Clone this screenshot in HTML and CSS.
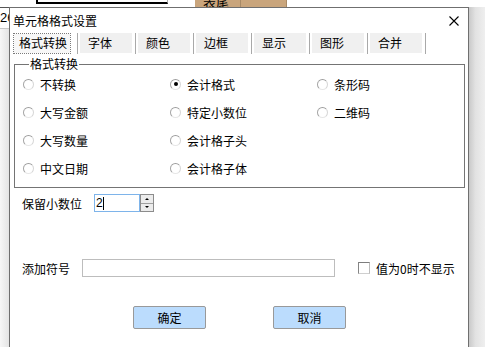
FILE: index.html
```html
<!DOCTYPE html>
<html lang="zh">
<head>
    <meta charset="UTF-8">
    <title>单元格格式设置</title>
    <link rel="stylesheet" href="styles.css">
</head>
<body>
<div class="screen">
    <div class="sheetTop">
        <div class="c blank"></div>
        <div class="c selected"></div>
        <div class="c gap"></div>
        <div class="c head">表尾</div>
        <div class="c head"></div>
    </div>
    <div class="rowHeads">
        <div class="rowNo">26</div>
    </div>

    <div class="dialog">
        <div class="titlebar">
            <span>单元格格式设置</span>
            <svg class="close" width="10" height="10" viewBox="0 0 10 10">
                <path d="M0.5 0.5 L9.5 9.5 M9.5 0.5 L0.5 9.5" stroke="#000" stroke-width="1.1"/>
            </svg>
        </div>

        <div class="tabs">
            <div class="tab active"><span>格式转换</span></div>
            <div class="tab"><span>字体</span></div>
            <div class="tab"><span>颜色</span></div>
            <div class="tab"><span>边框</span></div>
            <div class="tab"><span>显示</span></div>
            <div class="tab"><span>图形</span></div>
            <div class="tab"><span>合并</span></div>
            <div class="tabEnd"></div>
        </div>

        <fieldset class="group">
            <legend>格式转换</legend>
            <div class="radios">
                <label class="radio"><i></i>不转换</label>
                <label class="radio on"><i></i>会计格式</label>
                <label class="radio"><i></i>条形码</label>
                <label class="radio"><i></i>大写金额</label>
                <label class="radio"><i></i>特定小数位</label>
                <label class="radio"><i></i>二维码</label>
                <label class="radio"><i></i>大写数量</label>
                <label class="radio"><i></i>会计格子头</label>
                <div></div>
                <label class="radio"><i></i>中文日期</label>
                <label class="radio"><i></i>会计格子体</label>
            </div>
        </fieldset>

        <div class="row decimals">
            <span class="lbl">保留小数位</span>
            <div class="spin">
                <div class="spinText">2<b class="caret"></b></div>
                <div class="spinBtns">
                    <div class="up"></div>
                    <div class="down"></div>
                </div>
            </div>
        </div>

        <div class="row symbol">
            <span class="lbl">添加符号</span>
            <div class="textBox"></div>
            <label class="check"><i></i>值为0时不显示</label>
        </div>

        <div class="buttons">
            <button>确定</button>
            <button>取消</button>
        </div>
    </div>

    <div class="shadow"></div>
</div>
</body>
</html>
```

FILE: styles.css
```css
body {
    margin: 0;
    background-color: white;
    font-family: "Noto Sans CJK SC", "Noto Sans", sans-serif;
    font-size: 12px;
    color: #000;
    white-space: nowrap;
}
.screen {
    display: grid;
    grid-template-columns: 9px 460px 16px;
    grid-template-rows: 7px 340px;
    overflow: hidden;
}

/* spreadsheet behind the dialog */
.sheetTop {
    grid-column: 1 / 4;
    display: flex;
    height: 7px;
    overflow: hidden;
}
.sheetTop .c {
    height: 7px;
    box-sizing: border-box;
}
.blank {
    width: 36px;
}
.selected {
    width: 132px;
    height: 4px !important;
    border-left: 2px solid #000;
    border-bottom: 2px solid #000;
    border-right: 1px solid #b0b0b0;
}
.gap {
    width: 27px;
}
.head {
    width: 46px;
    background-color: #c9a57c;
    border-right: 1px solid #a88a66;
    display: flex;
    align-items: flex-end;
    padding-left: 8px;
    font-size: 13px;
    line-height: 11px;
    overflow: hidden;
}
.rowHeads {
    background: linear-gradient(to right, #f7f7f7, #e4e4e4);
    overflow: hidden;
    border-top: 1px solid #555;
}
.rowNo {
    background-color: white;
    height: 20px;
    font-family: "Liberation Sans", sans-serif;
    font-size: 13px;
    line-height: 20px;
    border-bottom: 1px solid #c8c8c8;
}
.shadow {
    background: linear-gradient(to right, #c9c9c9, #e2e2e2 40%, #efefef);
}

/* dialog */
.dialog {
    border: 1px solid #6f6f6f;
    border-bottom: none;
    background-color: white;
    padding: 0 3px 0 4px;
}
.titlebar {
    height: 24px;
    display: flex;
    justify-content: space-between;
    align-items: center;
    padding: 0 6px 0 0;
    margin-left: -1px;
}
.close {
    margin-top: 1px;
}

.tabs {
    display: flex;
    margin-top: 1px;
    height: 21px;
}
.tab {
    display: flex;
    width: 58px;
    box-sizing: border-box;
    border-left: 1px solid #a9a9a9;
    padding: 0 3px 1px 2px;
}
.tab span {
    flex: 1;
    background-color: #f0f0f0;
    padding-left: 8px;
    line-height: 20px;
}
.tab.active {
    border: 1px dotted #7a7a7a;
    padding: 0;
    margin-right: 6px;
    margin-left: -1px;
}
.tab.active span {
    background-color: #f7f7f7;
    padding-left: 5px;
    line-height: 18px;
}
.tabEnd {
    border-left: 1px solid #a9a9a9;
}

.group {
    margin: 2px 0 0 0;
    padding: 0 0 5px 8px;
    border: 1px solid #747474;
}
.group legend {
    padding: 0 1px;
    margin-left: 6px;
    line-height: 16px;
}
.radios {
    display: grid;
    grid-template-columns: 147px 147px 147px;
    grid-auto-rows: 28px;
    margin-top: -2px;
}
.radio {
    display: flex;
    align-items: center;
    gap: 6px;
}
.radio i {
    width: 9px;
    height: 9px;
    border-radius: 50%;
    border: 1px solid;
    border-color: #9c9c9c #d6d6d6 #e6e6e6 #a6a6a6;
    display: flex;
    align-items: center;
    justify-content: center;
}
.radio.on i::after {
    content: "";
    width: 4px;
    height: 4px;
    border-radius: 50%;
    background-color: #000;
}

.row {
    display: flex;
    align-items: center;
    padding-left: 8px;
}
.decimals {
    margin-top: 6px;
}
.decimals .lbl {
    width: 72px;
}
.spin {
    display: flex;
    height: 18px;
}
.spinText {
    width: 43px;
    border: 1px solid #7eb4ea;
    padding-left: 1px;
    font-family: "Liberation Sans", sans-serif;
    display: flex;
    align-items: center;
}
.caret {
    width: 1px;
    height: 13px;
    background-color: #000;
}
.spinBtns {
    width: 14px;
    display: flex;
    flex-direction: column;
    border: 1px solid #8c8c8c;
    box-sizing: border-box;
}
.spinBtns div {
    flex: 1;
    background-color: #ececec;
    display: flex;
    align-items: center;
    justify-content: center;
}
.spinBtns .up {
    border-bottom: 1px solid #a0a0a0;
}
.spinBtns .up::after {
    content: "";
    border: 2px solid transparent;
    border-bottom-color: #000;
    border-top: none;
}
.spinBtns .down::after {
    content: "";
    border: 2px solid transparent;
    border-top-color: #000;
    border-bottom: none;
}

.symbol {
    margin-top: 47px;
}
.symbol .lbl {
    width: 60px;
}
.textBox {
    width: 251px;
    height: 16px;
    border: 1px solid #bdbdbd;
}
.check {
    display: flex;
    align-items: center;
    gap: 6px;
    margin-left: 23px;
}
.check i {
    width: 10px;
    height: 10px;
    border: 1px solid;
    border-color: #7d7d7d #bcbcbc #cfcfcf #858585;
}

.buttons {
    display: flex;
    gap: 67px;
    margin-top: 29px;
    padding-left: 119px;
}
.buttons button {
    width: 73px;
    height: 23px;
    background-color: #bbdcfd;
    border: 1px solid #999;
    border-radius: 2px;
    font-family: inherit;
    font-size: 12px;
    padding: 0;
}
```
